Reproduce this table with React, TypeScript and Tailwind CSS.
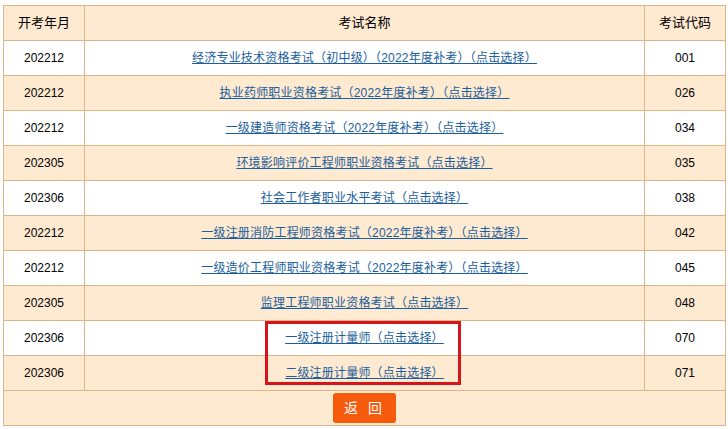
const rows = [
  { month: "202212", name: "经济专业技术资格考试（初中级）（2022年度补考）（点击选择）", code: "001" },
  { month: "202212", name: "执业药师职业资格考试（2022年度补考）（点击选择）", code: "026" },
  { month: "202212", name: "一级建造师资格考试（2022年度补考）（点击选择）", code: "034" },
  { month: "202305", name: "环境影响评价工程师职业资格考试（点击选择）", code: "035" },
  { month: "202306", name: "社会工作者职业水平考试（点击选择）", code: "038" },
  { month: "202212", name: "一级注册消防工程师资格考试（2022年度补考）（点击选择）", code: "042" },
  { month: "202212", name: "一级造价工程师职业资格考试（2022年度补考）（点击选择）", code: "045" },
  { month: "202305", name: "监理工程师职业资格考试（点击选择）", code: "048" },
  { month: "202306", name: "一级注册计量师（点击选择）", code: "070" },
  { month: "202306", name: "二级注册计量师（点击选择）", code: "071" },
];

export default function App() {
  return (
    <div
      className="relative w-[728px] h-[429px] bg-white pt-[5px] pl-[3px] text-[12px] text-black"
      style={{ fontFamily: '"Liberation Sans", "Noto Sans CJK SC", sans-serif' }}
    >
      <table className="border-collapse w-[722px] table-fixed">
        <colgroup>
          <col className="w-[81px]" />
          <col className="w-[560px]" />
          <col className="w-[81px]" />
        </colgroup>
        <thead>
          <tr className="h-[35px] bg-[#fee9d1]">
            <th className="border border-[#dcb68b] font-normal text-[13px]">开考年月</th>
            <th className="border border-[#dcb68b] font-normal text-[13px]">考试名称</th>
            <th className="border border-[#dcb68b] font-normal text-[13px]">考试代码</th>
          </tr>
        </thead>
        <tbody>
          {rows.map((r, i) => (
            <tr key={r.code} className={`h-[35px] ${i % 2 === 0 ? "bg-white" : "bg-[#fee9d1]"}`}>
              <td className="border border-[#dcb68b] text-center">{r.month}</td>
              <td className="border border-[#dcb68b] text-center">
                <a href="#" className="text-[#1b5e9c] underline underline-offset-[1px] tracking-[0.2px]">
                  {r.name}
                </a>
              </td>
              <td className="border border-[#dcb68b] text-center">{r.code}</td>
            </tr>
          ))}
          <tr className="h-[35px] bg-[#fee9d1]">
            <td colSpan={3} className="border border-[#dcb68b] text-center">
              <button className="w-[63px] h-[30px] bg-[#f65a0c] text-white text-[14px] rounded-[3px] tracking-[3px]">
                返 回
              </button>
            </td>
          </tr>
        </tbody>
      </table>
      {/* highlight box */}
      <div className="absolute left-[265px] top-[321px] w-[196px] h-[64px] border-[3px] border-[#d7141c] pointer-events-none" />
    </div>
  );
}
